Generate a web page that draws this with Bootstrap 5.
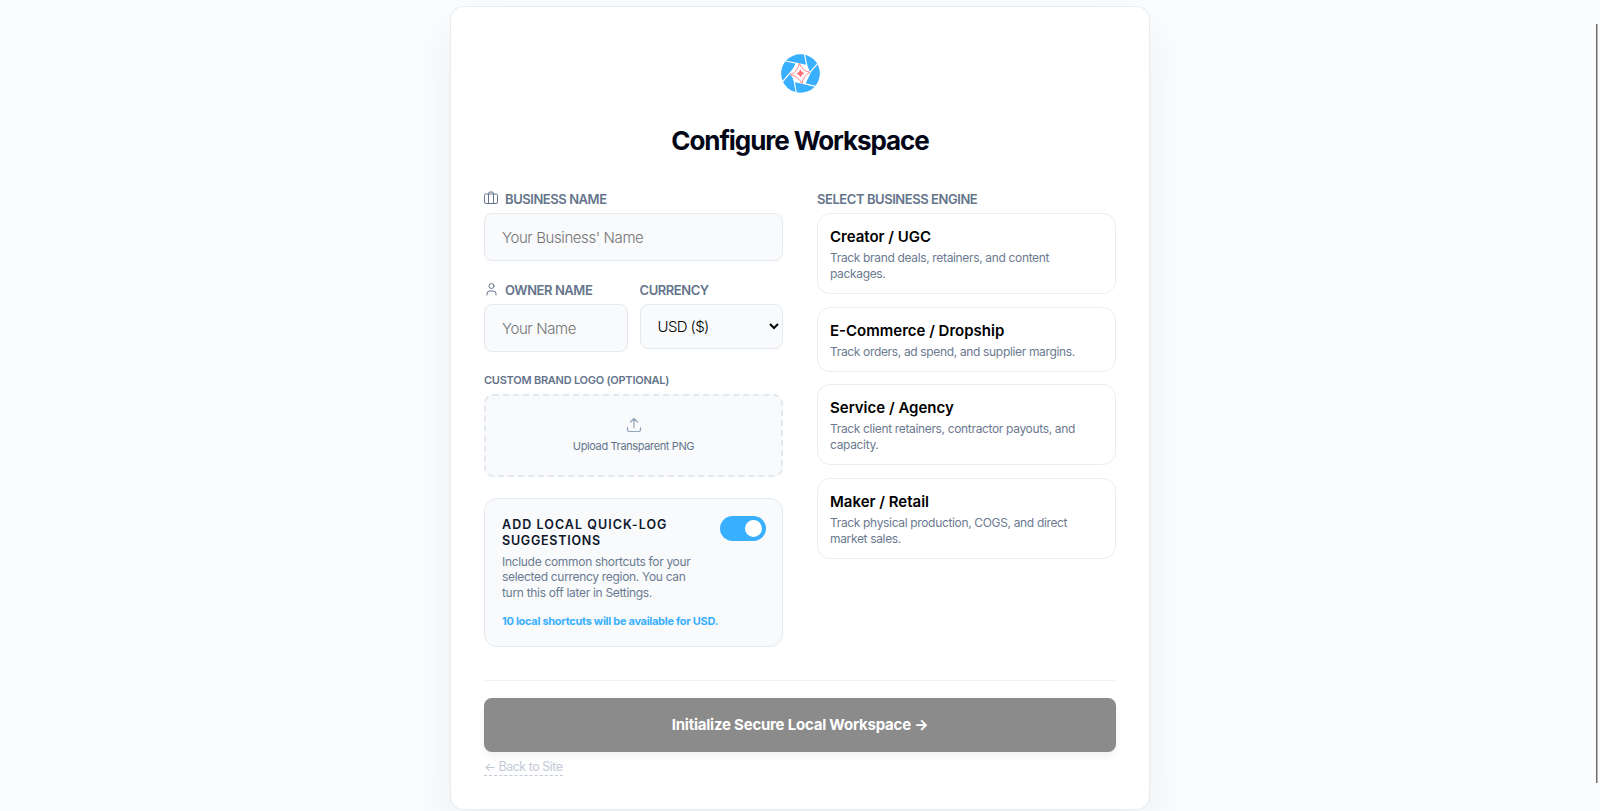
<!DOCTYPE html>
<html lang="en">
<head>
  <meta charset="UTF-8">
  <meta name="viewport" content="width=device-width, initial-scale=1">
  <title>Configure Workspace</title>
  <link href="https://cdn.jsdelivr.net/npm/bootstrap@5.3.3/dist/css/bootstrap.min.css" rel="stylesheet">
  <style>
    body {
      background: #fafcfe;
      font-family: Inter, "Liberation Sans", sans-serif;
      color: #020617;
      height: 811px;
      overflow: hidden;
    }
    .setup-card {
      width: 700px;
      height: 804px;
      margin-top: 6px;
      padding: 47px 33px 0;
      border: 1px solid #e8ecf1;
      border-radius: 13px;
      box-shadow: 0 20px 50px rgba(0, 0, 0, .06);
    }
    .setup-logo { width: 39px; height: 39px; }
    .setup-title {
      margin: 31px 0;
      font-size: 26px;
      line-height: 34px;
      font-weight: 650;
      letter-spacing: -1.08px;
    }
    .two-col { gap: 34px; }
    .two-col > div { flex: 1 1 0; min-width: 0; }

    /* form */
    .field-label {
      display: flex;
      align-items: center;
      height: 20px;
      margin-bottom: 4px;
      padding-top: 1px;
      font-size: 13px;
      font-weight: 600;
      letter-spacing: -.44px;
      color: #64748b;
      white-space: nowrap;
    }
    .field-label svg { margin-right: 7px; margin-top: -4px; }
    .logo-label {
      height: 16px;
      margin-bottom: 6px;
      padding-top: 2px;
      font-size: 11px;
      letter-spacing: -.25px;
    }
    .field-input, .field-select {
      width: 100%;
      height: 47.5px;
      padding: 1px 17px 0;
      border: 1px solid #e5eaf0;
      border-radius: 8px;
      background: #f8fafc;
      font-size: 15px;
      font-weight: 300;
      letter-spacing: -.4px;
      color: #000;
    }
    .field-input::placeholder { color: #757575; opacity: 1; }
    .field-select { height: 45px; padding: 0 1px 0 13px; letter-spacing: -.6px; }
    .field-block { margin-bottom: 20px; }
    .owner-row { margin-bottom: 20px; margin-top: -.5px; }
    .upload-box {
      height: 83px;
      border: 2px dashed #e4e9ef;
      border-radius: 9px;
      background: #f8fafc;
      color: #64748b;
      font-size: 11px;
      line-height: 15px;
      letter-spacing: -.37px;
    }
    .upload-box svg { color: #94a3b8; margin-bottom: 6px; }

    /* quick-log suggestions */
    .hint-box {
      height: 149px;
      margin-top: 21px;
      padding: 17px 16px 0 17px;
      border: 1px solid #e5eaf0;
      border-radius: 13px;
      background: #f8fafc;
    }
    .hint-title {
      margin-top: 1px;
      font-size: 12.5px;
      line-height: 16.5px;
      font-weight: 600;
      letter-spacing: 1.05px;
      color: #0f172a;
    }
    .hint-title span { letter-spacing: .75px; }
    .hint-text {
      margin-top: 4px;
      font-size: 12px;
      line-height: 15.7px;
      letter-spacing: -.31px;
      color: #6b7a90;
      white-space: nowrap;
    }
    .hint-count {
      margin-top: 12px;
      font-size: 11px;
      line-height: 16px;
      font-weight: 700;
      letter-spacing: -.295px;
      color: #38b0ff;
      white-space: nowrap;
    }
    .hint-switch {
      width: 46px;
      height: 25px;
      padding: 4px;
      border-radius: 13px;
      background: #38b0ff;
    }
    .hint-switch span { width: 17px; height: 17px; border-radius: 50%; background: #fff; }

    /* business engines */
    .engine {
      height: 81px;
      padding: 12px 12px 0;
      margin-bottom: 12.5px;
      border: 1px solid #e9eef3;
      border-radius: 13px;
      background: #fff;
    }
    .engine-short { height: 65px; }
    .engine h2 { margin: 0; font-size: 15px; line-height: 22px; font-weight: 600; color: #000; }
    .engine p {
      margin: 2px 0 0;
      font-size: 12px;
      line-height: 16px;
      letter-spacing: -.34px;
      color: #6b7a90;
      white-space: nowrap;
    }

    .submit-area { margin-top: 33px; padding-top: 17px; border-top: 1px solid #eff2f6; }
    .submit-btn, .submit-btn:hover {
      height: 54px;
      padding-top: 8px;
      border-radius: 8px;
      background: #8b8b8b;
      color: #fff;
      font-size: 15px;
      font-weight: 700;
      letter-spacing: -.22px;
      box-shadow: 0 4px 8px rgba(0, 0, 0, .06);
    }
    .back-link {
      display: inline-block;
      margin-top: 6.5px;
      font-size: 12.5px;
      line-height: 17px;
      letter-spacing: -.49px;
      color: #c3cad6;
      border-bottom: 1px dashed #c3cad6;
      text-decoration: none;
    }
    .scroll-thumb {
      position: absolute;
      top: 24px;
      right: 2px;
      width: 2px;
      height: 759px;
      background: #6b6b6b;
      border-right: 1px solid #b5b5b5;
    }
  </style>
</head>
<body>

<main class="setup-card bg-white mx-auto">
  <!-- Aperture logo -->
  <svg class="setup-logo d-block mx-auto" viewBox="64 41 117 117">
    <circle cx="122.500" cy="99.500" r="58" fill="#38b0ff"/>
    <path d="M108 68 143 76 153 98 137 131 104 123 92 101Z" fill="#fff"/>
    <path d="M78 62 143 76M134 40 146 97M179 64 137 112M168 138 104 123M110 159 100 101M65 128 110 76" stroke="#fff" stroke-width="3.500"/>
    <path d="M119 69Q127 91 151 96 131 106 127 130 117 109 93 103 114 94 119 69Z" fill="#fff" stroke="#ff8588" stroke-width="3"/>
    <path d="M122 88Q124 97 133 99 125 101 123 110 120 102 112 100 120 97 122 88Z" fill="#ff6b70" stroke="#ff6b70" stroke-width="1.500"/>
  </svg>
  <h1 class="setup-title text-center">Configure Workspace</h1>

  <div class="two-col d-flex">
    <div>
      <div class="field-block">
        <label class="field-label" for="businessName">
          <svg width="14" height="14" viewBox="0 0 14 14" fill="none" stroke="currentColor">
            <rect x=".5" y="3" width="13" height="9.500" rx="1.500"/>
            <path d="M4.500 12.500V2.500Q4.500 1 6 1h2q1.500 0 1.500 1.500v10"/>
          </svg>
          BUSINESS NAME
        </label>
        <input class="field-input" id="businessName" type="text" placeholder="Your Business' Name">
      </div>

      <div class="owner-row d-flex">
        <div class="w-50 me-2">
          <label class="field-label" for="ownerName">
            <svg width="14" height="14" viewBox="0 0 14 14" fill="none" stroke="currentColor" stroke-linecap="round">
              <circle cx="7.500" cy="4" r="2.500"/>
              <path d="M3 13v-1.200Q3 9 5.800 9h3.400q2.800 0 2.800 2.800V13"/>
            </svg>
            OWNER NAME
          </label>
          <input class="field-input" id="ownerName" type="text" placeholder="Your Name">
        </div>
        <div class="w-50 ms-1">
          <label class="field-label" for="currency">CURRENCY</label>
          <select class="field-select" id="currency">
            <option>USD ($)</option>
          </select>
        </div>
      </div>

      <div class="field-label logo-label">CUSTOM BRAND LOGO (OPTIONAL)</div>
      <div class="upload-box d-flex flex-column align-items-center justify-content-center">
        <svg width="16" height="16" viewBox="0 0 16 16" fill="none" stroke="currentColor" stroke-width="1.200" stroke-linecap="round" stroke-linejoin="round">
          <path d="M8 10.500V1.500M4.500 5 8 1.500 11.500 5M1.500 10.500v2.300q0 1.700 1.700 1.700h9.600q1.700 0 1.700-1.700v-2.300"/>
        </svg>
        Upload Transparent PNG
      </div>

      <div class="hint-box">
        <div class="d-flex justify-content-between">
          <div>
            <div class="hint-title">ADD LOCAL QUICK-LOG<br><span>SUGGESTIONS</span></div>
            <div class="hint-text">Include common shortcuts for your<br>selected currency region. You can<br>turn this off later in Settings.</div>
          </div>
          <div class="hint-switch d-flex justify-content-end flex-shrink-0" role="switch" aria-checked="true"><span></span></div>
        </div>
        <div class="hint-count">10 local shortcuts will be available for USD.</div>
      </div>
    </div>

    <div>
      <div class="field-label">SELECT BUSINESS ENGINE</div>
      <div class="engine">
        <h2>Creator / UGC</h2>
        <p>Track brand deals, retainers, and content<br>packages.</p>
      </div>
      <div class="engine engine-short">
        <h2>E-Commerce / Dropship</h2>
        <p>Track orders, ad spend, and supplier margins.</p>
      </div>
      <div class="engine">
        <h2>Service / Agency</h2>
        <p>Track client retainers, contractor payouts, and<br>capacity.</p>
      </div>
      <div class="engine">
        <h2>Maker / Retail</h2>
        <p>Track physical production, COGS, and direct<br>market sales.</p>
      </div>
    </div>
  </div>

  <div class="submit-area">
    <button class="submit-btn btn w-100 border-0" type="button">Initialize Secure Local Workspace →</button>
    <a class="back-link" href="#">← Back to Site</a>
  </div>
</main>

<div class="scroll-thumb"></div>

<script src="https://cdn.jsdelivr.net/npm/bootstrap@5.3.3/dist/js/bootstrap.bundle.min.js"></script>
</body>
</html>
